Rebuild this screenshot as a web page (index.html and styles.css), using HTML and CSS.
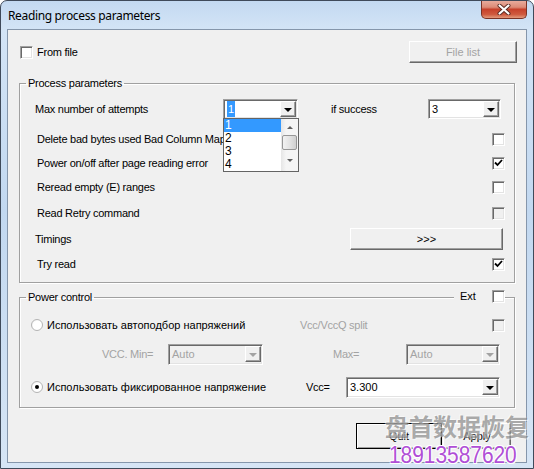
FILE: index.html
```html
<!DOCTYPE html>
<html lang="en">
<head>
    <meta charset="UTF-8">
    <meta name="viewport" content="width=device-width, initial-scale=1.0">
    <title>Reading process parameters</title>
    <link rel="stylesheet" href="styles.css">
</head>
<body>
    <div class="window">
        <div class="titlebar">
            <span class="title">Reading process parameters</span>
            <div class="close">
                <svg width="14" height="11" viewBox="0 0 14 11">
                    <path d="M2.5 1.5 L11.5 9.5 M11.5 1.5 L2.5 9.5" stroke="#5a2a22" stroke-width="4" stroke-linecap="round"/>
                    <path d="M2.5 1.5 L11.5 9.5 M11.5 1.5 L2.5 9.5" stroke="#fff" stroke-width="2.2" stroke-linecap="round"/>
                </svg>
            </div>
        </div>

        <div class="client">
            <div class="top-row">
                <span class="checkbox"></span>
                <span class="check-text">From file</span>
                <button class="btn btn-file" disabled>File list</button>
            </div>

            <fieldset class="group">
                <legend>Process parameters</legend>
                <div class="group-body body-process">
                    <div class="row row-first">
                        <span class="lbl lbl-attempts">Max number of attempts</span>
                        <div class="combo combo-attempts">
                            <span class="combo-value"><span class="hl">1</span></span>
                            <span class="combo-btn"><span class="arrow"></span></span>
                        </div>
                        <span class="lbl lbl-success">if success</span>
                        <div class="combo combo-success">
                            <span class="combo-value">3</span>
                            <span class="combo-btn"><span class="arrow"></span></span>
                        </div>
                    </div>
                    <div class="row">
                        <span class="lbl lbl-ind">Delete bad bytes used Bad Column Map</span>
                        <span class="checkbox push"></span>
                    </div>
                    <div class="row">
                        <span class="lbl lbl-ind">Power on/off after page reading error</span>
                        <span class="checkbox push checked">
                            <svg width="9" height="8" viewBox="0 0 9 8"><path d="M1 3.5 L3.5 6 L8 1" fill="none" stroke="#000" stroke-width="1.8"/></svg>
                        </span>
                    </div>
                    <div class="row">
                        <span class="lbl lbl-ind">Reread empty (E) ranges</span>
                        <span class="checkbox push"></span>
                    </div>
                    <div class="row row-tall">
                        <span class="lbl lbl-ind">Read Retry command</span>
                        <span class="checkbox push disabled"></span>
                    </div>
                    <div class="row">
                        <span class="lbl">Timings</span>
                        <button class="btn btn-timings">&gt;&gt;&gt;</button>
                    </div>
                    <div class="row row-last">
                        <span class="lbl lbl-ind">Try read</span>
                        <span class="checkbox push checked">
                            <svg width="9" height="8" viewBox="0 0 9 8"><path d="M1 3.5 L3.5 6 L8 1" fill="none" stroke="#000" stroke-width="1.8"/></svg>
                        </span>
                    </div>
                </div>
            </fieldset>

            <fieldset class="group group-power">
                <legend>Power control</legend>
                <div class="ext">
                    <span class="ext-text">Ext</span>
                    <span class="checkbox"></span>
                </div>
                <div class="group-body body-power">
                    <div class="prow prow-auto">
                        <span class="radio"></span>
                        <span class="lbl cyr radio-auto">Использовать автоподбор напряжений</span>
                        <span class="lbl muted">Vcc/VccQ split</span>
                        <span class="checkbox push disabled"></span>
                    </div>
                    <div class="prow prow-range">
                        <span class="lbl muted lbl-min">VCC. Min=</span>
                        <div class="combo combo-min disabled">
                            <span class="combo-value">Auto</span>
                            <span class="combo-btn"><span class="arrow"></span></span>
                        </div>
                        <span class="lbl muted lbl-max">Max=</span>
                        <div class="combo combo-max disabled">
                            <span class="combo-value">Auto</span>
                            <span class="combo-btn"><span class="arrow"></span></span>
                        </div>
                    </div>
                    <div class="prow prow-fixed">
                        <span class="radio checked"></span>
                        <span class="lbl cyr radio-fixed">Использовать фиксированное напряжение</span>
                        <span class="lbl lbl-vcc">Vcc=</span>
                        <div class="combo combo-vcc">
                            <span class="combo-value">3.300</span>
                            <span class="combo-btn"><span class="arrow"></span></span>
                        </div>
                    </div>
                </div>
            </fieldset>

            <div class="actions">
                <button class="btn btn-action btn-quit">Quit</button>
                <button class="btn btn-action btn-apply">Apply</button>
            </div>

            <div class="dropdown">
                <div class="dropdown-items">
                    <div class="item selected">1</div>
                    <div class="item">2</div>
                    <div class="item">3</div>
                    <div class="item">4</div>
                </div>
                <div class="scrollbar">
                    <span class="sb-up"></span>
                    <span class="sb-thumb"></span>
                    <span class="sb-down"></span>
                </div>
            </div>
        </div>

        <div class="watermark">
            <div class="wm-name">盘首数据恢复</div>
            <div class="wm-phone">18913587620</div>
        </div>
    </div>
</body>
</html>
```

FILE: styles.css
```css
body {
    margin: 0;
    font-family: "Liberation Sans", Arial, sans-serif;
    font-size: 11px;
    color: #000;
    background: #fff;
}

.window {
    position: relative;
    width: 534px;
    height: 469px;
    box-sizing: border-box;
    border: 1px solid #3f4a5a;
    border-radius: 7px 7px 0 0;
    padding: 0 6px 6px;
    background: linear-gradient(#c3d9f1, #d3e4f6 28px, #c2d8f0 45%, #d6e5f5);
    overflow: hidden;
}

.titlebar {
    position: relative;
    height: 28px;
    display: flex;
    align-items: center;
    padding-left: 1px;
}

.title {
    font-family: "Noto Sans", sans-serif;
    font-size: 12px;
    letter-spacing: -0.35px;
}

.close {
    position: absolute;
    top: -1px;
    right: 0;
    width: 46px;
    height: 19px;
    box-sizing: border-box;
    border: 1px solid #7a3326;
    border-top: none;
    border-radius: 0 0 5px 5px;
    background: linear-gradient(#eab0a2, #dc8b77 40%, #c7412b 52%, #cf5a3f 80%, #e39a7c);
    display: flex;
    align-items: center;
    justify-content: center;
}

.client {
    position: relative;
    height: 434px;
    box-sizing: border-box;
    border: 1px solid #8596ab;
    background: #f0f0f0;
    padding-top: 11px;
}

/* controls */

.checkbox {
    width: 13px;
    height: 13px;
    box-sizing: border-box;
    border: 1px solid;
    border-color: #a0a0a0 #fff #fff #a0a0a0;
    box-shadow: inset 1px 1px 0 #696969, inset -1px -1px 0 #e3e3e3;
    background: #fff;
    display: flex;
    align-items: center;
    justify-content: center;
    flex-shrink: 0;
}

.checkbox.disabled {
    background: #f0f0f0;
}

.push {
    margin-left: auto;
}

.radio {
    width: 12px;
    height: 12px;
    box-sizing: border-box;
    border-radius: 50%;
    border: 1px solid #b4b4b4;
    background: radial-gradient(circle at 60% 60%, #fff 55%, #e8e8e8);
    display: flex;
    align-items: center;
    justify-content: center;
    flex-shrink: 0;
}

.radio.checked::after {
    content: "";
    width: 4px;
    height: 4px;
    border-radius: 50%;
    background: #000;
}

.btn {
    font-family: "Liberation Sans", Arial, sans-serif;
    font-size: 11px;
    color: #000;
    background: #f0f0f0;
    box-sizing: border-box;
    border: 1px solid;
    border-color: #fff #696969 #696969 #fff;
    box-shadow: inset -1px -1px 0 #a0a0a0;
    padding: 0;
}

.btn:disabled {
    color: #a3a3a3;
}

.combo {
    position: relative;
    height: 20px;
    box-sizing: border-box;
    border: 1px solid;
    border-color: #a0a0a0 #fff #fff #a0a0a0;
    box-shadow: inset 1px 1px 0 #696969, inset -1px -1px 0 #e3e3e3;
    background: #fff;
    display: flex;
    align-items: center;
    flex-shrink: 0;
}

.combo.disabled {
    background: #f0f0f0;
    color: #a3a3a3;
    height: 21px;
}

.combo-value {
    padding-left: 3px;
    flex: 1;
}

.hl {
    background: #3399ff;
    color: #fff;
    padding: 2px 1px;
}

.combo-btn {
    width: 16px;
    height: 16px;
    margin-right: 1px;
    box-sizing: border-box;
    border: 1px solid;
    border-color: #fff #696969 #696969 #fff;
    box-shadow: inset -1px -1px 0 #a0a0a0;
    background: #f0f0f0;
    display: flex;
    align-items: center;
    justify-content: center;
}

.arrow {
    width: 0;
    height: 0;
    border-left: 4px solid transparent;
    border-right: 4px solid transparent;
    border-top: 4px solid #000;
    margin-top: 1px;
}

.combo.disabled .arrow {
    border-top-color: #a3a3a3;
}

.lbl {
    white-space: nowrap;
    letter-spacing: -0.25px;
}

.lbl.cyr {
    letter-spacing: 0;
}

.muted {
    color: #a3a3a3;
}

/* top row */

.top-row {
    display: flex;
    align-items: center;
    height: 22px;
    padding: 0 9px 0 12px;
}

.check-text {
    margin-left: 4px;
    letter-spacing: -0.25px;
}

.btn-file {
    margin-left: auto;
    width: 108px;
    height: 22px;
}

/* group boxes */

.group {
    margin: 13px 11px 0;
    padding: 0;
    border: 1px solid #a0a0a0;
    box-shadow: inset 1px 1px 0 #fff, 1px 1px 0 #fff;
    min-inline-size: 0;
}

.group legend {
    margin-left: 6px;
    padding: 0 2px;
    line-height: 14px;
    letter-spacing: -0.25px;
}

.body-process {
    padding: 8px 9px 5px 15px;
}

.row {
    display: flex;
    align-items: center;
    height: 24px;
}

.row-first {
    height: 22px;
    margin-bottom: 7px;
}

.row-tall {
    height: 28px;
}

.row-last {
    height: 26px;
}

.lbl-ind {
    padding-left: 2px;
}

.lbl-attempts {
    width: 188px;
}

.combo-attempts {
    width: 75px;
}

.lbl-success {
    margin-left: 33px;
    width: 97px;
}

.combo-success {
    width: 73px;
}

.btn-timings {
    margin-left: auto;
    margin-right: 2px;
    width: 153px;
    height: 22px;
}

/* power control */

.group-power {
    position: relative;
    margin-top: 7px;
}

.ext {
    position: absolute;
    top: -15px;
    right: 9px;
    height: 14px;
    display: flex;
    align-items: center;
    padding-left: 6px;
    background: #f0f0f0;
}

.ext-text {
    width: 32px;
}

.body-power {
    padding: 12px 9px 9px 11px;
}

.prow {
    display: flex;
    align-items: center;
    height: 22px;
}

.prow-auto {
    height: 18px;
}

.prow-range {
    margin-top: 9px;
}

.prow-fixed {
    margin-top: 11px;
}

.radio-auto {
    margin-left: 4px;
    width: 253px;
}

.radio-fixed {
    margin-left: 4px;
    width: 259px;
}

.lbl-min {
    margin-left: 71px;
    width: 66px;
}

.combo-min {
    width: 95px;
}

.lbl-max {
    margin-left: 70px;
    width: 73px;
}

.combo-max {
    width: 94px;
}

.lbl-vcc {
    width: 40px;
}

.combo-vcc {
    width: 154px;
    height: 21px;
}

/* bottom buttons */

.actions {
    display: flex;
    justify-content: flex-end;
    gap: 1px;
    margin-top: 15px;
    padding-right: 15px;
}

.btn-action {
    height: 26px;
}

.btn-quit {
    width: 86px;
    border-color: #000;
    box-shadow: inset 1px 1px 0 #fff, inset -1px -1px 0 #a0a0a0;
}

.btn-apply {
    width: 68px;
}

/* open list of the attempts combo */

.dropdown {
    position: absolute;
    left: 215px;
    top: 88px;
    width: 76px;
    height: 54px;
    box-sizing: border-box;
    border: 1px solid #646464;
    background: #fff;
    display: flex;
}

.dropdown-items {
    flex: 1;
}

.item {
    height: 13px;
    line-height: 13px;
    padding-left: 1px;
    font-size: 12px;
}

.item.selected {
    background: #3399ff;
    color: #fff;
}

.scrollbar {
    width: 17px;
    background: linear-gradient(90deg, #e6e6e6, #f5f5f5 30%, #f5f5f5);
    display: flex;
    flex-direction: column;
    align-items: center;
}

.sb-up,
.sb-down {
    width: 0;
    height: 0;
    border-left: 3px solid transparent;
    border-right: 3px solid transparent;
}

.sb-up {
    margin-top: 7px;
    border-bottom: 3px solid #606060;
}

.sb-down {
    margin-top: 9px;
    border-top: 3px solid #606060;
}

.sb-thumb {
    margin-top: 6px;
    width: 15px;
    height: 15px;
    box-sizing: border-box;
    border: 1px solid #979797;
    border-radius: 2px;
    background: linear-gradient(90deg, #f2f2f2, #e3e3e3 50%, #d0d0d0);
}

/* watermark */

.watermark {
    position: absolute;
    left: 384px;
    top: 408px;
    pointer-events: none;
}

.wm-name {
    font-family: "Noto Sans CJK SC", sans-serif;
    font-size: 24px;
    font-weight: bold;
    line-height: 34px;
    color: rgba(100, 100, 100, 0.55);
    text-shadow: 1px 1px 0 rgba(255, 255, 255, 0.5), -1px -1px 0 rgba(255, 255, 255, 0.5);
}

.wm-phone {
    margin-left: 4px;
    font-family: "Liberation Sans", Arial, sans-serif;
    font-size: 24px;
    line-height: 24px;
    color: #b04fd6;
    transform: scaleX(0.87);
    transform-origin: left;
    text-shadow: 1px 1px 0 #fff, -1px -1px 0 #fff, 1px -1px 0 #fff, -1px 1px 0 #fff;
}
```
